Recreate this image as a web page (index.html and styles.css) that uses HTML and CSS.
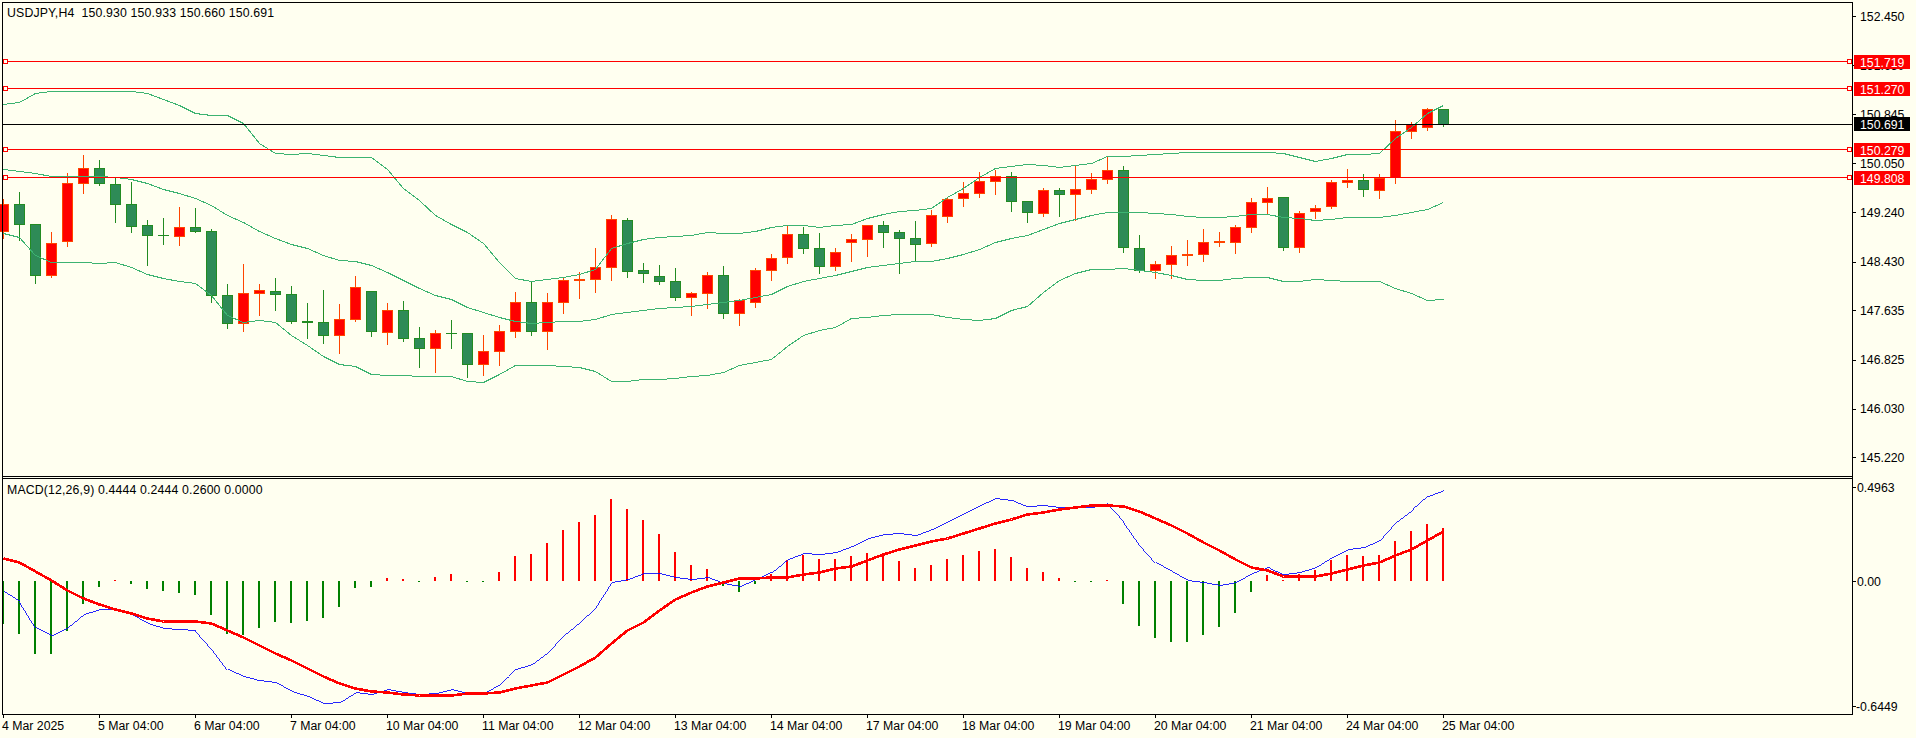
FILE: index.html
```html
<!DOCTYPE html>
<html lang="en">
  <head>
    <meta charset="UTF-8" />
    <title>USDJPY,H4</title>
    <link rel="stylesheet" href="styles.css">
  </head>
  <body>
    <svg class="chart" width="1916" height="738" viewBox="0 0 1916 738">
      <!-- Filled in by script.js -->
      <g id="candles"></g>
      <g id="bands"></g>
      <g id="histogram"></g>
      <g id="macdLines"></g>
      <g id="ticks"></g>

      <!-- Window frames -->
      <line class="frame" x1="2" y1="2.5" x2="1853" y2="2.5" />
      <line class="frame" x1="2" y1="476.5" x2="1853" y2="476.5" />
      <line class="frame" x1="2" y1="478.5" x2="1853" y2="478.5" />
      <line class="frame" x1="2" y1="714.5" x2="1853" y2="714.5" />
      <line class="frame" x1="2.5" y1="2" x2="2.5" y2="715" />
      <line class="frame" x1="1852.5" y1="2" x2="1852.5" y2="715" />

      <!-- Captions -->
      <text class="label caption" x="7" y="17">USDJPY,H4&#160;&#160;150.930 150.933 150.660 150.691</text>
      <text class="label caption" x="7" y="494">MACD(12,26,9) 0.4444 0.2444 0.2600 0.0000</text>

      <!-- Price scale -->
      <text class="label" x="1860" y="21">152.450</text>
      <text class="label" x="1860" y="70">151.650</text>
      <text class="label" x="1860" y="119">150.845</text>
      <text class="label" x="1860" y="168">150.050</text>
      <text class="label" x="1860" y="217">149.240</text>
      <text class="label" x="1860" y="266">148.430</text>
      <text class="label" x="1860" y="315">147.635</text>
      <text class="label" x="1860" y="364">146.825</text>
      <text class="label" x="1860" y="413">146.030</text>
      <text class="label" x="1860" y="462">145.220</text>

      <!-- MACD scale -->
      <text class="label" x="1857" y="492">0.4963</text>
      <text class="label" x="1857" y="586">0.00</text>
      <text class="label" x="1856" y="711">-0.6449</text>

      <!-- Horizontal levels and their price tags -->
      <g id="levels"></g>
      <g class="tag-red">
        <rect x="1854" y="55" width="56" height="14" />
        <text x="1860" y="67">151.719</text>
        <rect x="1854" y="82" width="56" height="14" />
        <text x="1860" y="94">151.270</text>
        <rect x="1854" y="143" width="56" height="14" />
        <text x="1860" y="155">150.279</text>
        <rect x="1854" y="171" width="56" height="14" />
        <text x="1860" y="183">149.808</text>
      </g>
      <g class="tag-black">
        <rect x="1854" y="117" width="56" height="14" />
        <text x="1860" y="129">150.691</text>
      </g>

      <!-- Time scale -->
      <text class="label" x="2" y="730">4 Mar 2025</text>
      <text class="label" x="98" y="730">5 Mar 04:00</text>
      <text class="label" x="194" y="730">6 Mar 04:00</text>
      <text class="label" x="290" y="730">7 Mar 04:00</text>
      <text class="label" x="386" y="730">10 Mar 04:00</text>
      <text class="label" x="482" y="730">11 Mar 04:00</text>
      <text class="label" x="578" y="730">12 Mar 04:00</text>
      <text class="label" x="674" y="730">13 Mar 04:00</text>
      <text class="label" x="770" y="730">14 Mar 04:00</text>
      <text class="label" x="866" y="730">17 Mar 04:00</text>
      <text class="label" x="962" y="730">18 Mar 04:00</text>
      <text class="label" x="1058" y="730">19 Mar 04:00</text>
      <text class="label" x="1154" y="730">20 Mar 04:00</text>
      <text class="label" x="1250" y="730">21 Mar 04:00</text>
      <text class="label" x="1346" y="730">24 Mar 04:00</text>
      <text class="label" x="1442" y="730">25 Mar 04:00</text>
    </svg>
    <script src="script.js"></script>
  </body>
</html>
```

FILE: styles.css
```css
/* Basic page styling */
body {
  margin: 0;
  background-color: #fffff0;
  overflow: hidden;
}

.chart {
  display: block;
  font-family: "Liberation Sans", Arial, sans-serif;
  font-size: 12.3px;
}

.label {
  fill: #000;
}

.caption {
  letter-spacing: 0.15px;
}

/* Frames and ticks */
.frame,
.tick {
  stroke: #000;
  stroke-width: 1;
}

/* Candles */
.wick-up {
  fill: #ff4500;
}

.wick-down {
  fill: #228b22;
}

.body-up {
  fill: #ff0000;
}

.body-down {
  fill: #2e8b57;
}

/* Indicator lines */
.band,
.macd,
.signal {
  fill: none;
  shape-rendering: crispEdges;
}

.band {
  stroke: #3cb371;
  stroke-width: 1;
}

.macd {
  stroke: #0000ff;
  stroke-width: 0.85;
}

.signal {
  stroke: #ff0000;
  stroke-width: 2.6;
}

/* MACD histogram */
.hist-up {
  fill: #ff0000;
}

.hist-down {
  fill: #008000;
}

/* Horizontal levels */
.level-red {
  stroke: #ff0000;
}

.level-black {
  stroke: #000;
}

.anchor {
  fill: #fffff0;
  stroke: #ff0000;
  stroke-width: 1;
}

/* Price tags */
.tag-red rect {
  fill: #ff0000;
}

.tag-black rect {
  fill: #000;
}

.tag-red text,
.tag-black text {
  fill: #fff;
}
```

FILE: script.js
```js
// Each candle: direction, body top, body bottom, high, low (y values times 3)
const candles = [
  ["u",613,695,597,713],["d",613,674,576,720],["d",673,827,673,848],["u",730,827,696,830],
  ["u",550,727,520,738],["u",505,551,465,578],["d",505,551,480,555],["d",553,614,530,665],
  ["d",613,680,546,695],["d",676,707,660,795],["d",705,707,655,732],["u",682,710,622,735],
  ["d",682,695,625,695],["d",694,887,688,905],["d",886,971,852,984],["u",880,971,793,993],
  ["u",870,881,852,945],["d",874,884,834,930],["d",883,965,858,968],["d",964,968,909,1014],
  ["d",967,1007,870,1029],["u",958,1007,912,1059],["u",862,959,828,963],["d",874,995,874,1007],
  ["u",931,998,909,1032],["d",931,1016,903,1023],["d",1015,1046,981,1100],["u",1000,1046,990,1115],
  ["d",999,1001,960,1044],["d",1000,1094,1000,1132],["u",1054,1094,1005,1125],["u",994,1055,975,1095],
  ["u",907,995,876,1011],["d",907,995,843,1004],["u",907,995,880,1047],["u",841,908,834,939],
  ["u",837,842,817,894],["u",802,839,744,876],["u",658,803,645,839],["d",661,815,655,830],
  ["d",810,821,789,846],["d",829,845,795,852],["d",844,893,804,899],["u",880,893,875,945],
  ["u",826,881,816,924],["d",826,941,798,953],["u",901,941,897,975],["u",811,908,804,921],
  ["u",775,812,762,840],["u",703,773,678,789],["d",703,746,681,759],["d",745,800,699,819],
  ["u",757,800,744,810],["u",718,728,702,783],["u",676,719,676,768],["d",676,698,663,741],
  ["d",697,716,690,819],["d",715,734,663,784],["u",646,731,630,738],["u",598,650,591,666],
  ["u",580,596,546,618],["u",544,581,517,591],["u",529,545,510,582],["d",529,605,517,633],
  ["d",604,638,604,666],["u",571,641,564,648],["d",571,584,564,648],["u",568,584,495,660],
  ["u",538,569,519,579],["u",511,539,471,549],["d",511,743,498,756],["d",745,812,705,816],
  ["u",793,812,783,834],["u",766,794,738,834],["u",763,767,720,795],["u",727,764,687,783],
  ["u",724,729,696,738],["u",682,728,675,759],["u",607,683,594,696],["u",595,608,561,639],
  ["d",592,743,592,750],["u",640,743,633,756],["u",625,637,615,654],["u",547,620,540,624],
  ["u",541,548,507,561],["d",541,569,522,588],["u",533,572,522,594],["u",394,533,360,549],
  ["u",373,395,366,414],["u",328,383,325,390],["d",328,374,328,377]
];

// Bollinger bands, one y value per candle (times 3)
const upperBand = [313,307,280,274,274,274,274,274,274,279,296,315,340,346,346,370,430,460,463,460,465,471,472,472,508,563,600,645,672,697,730,785,833,843,838,831,822,806,743,730,716,710,709,705,697,700,700,693,681,676,676,680,674,673,654,642,634,630,625,591,565,531,505,497,493,496,501,496,488,469,468,465,462,460,457,457,457,457,455,456,460,470,483,473,463,463,458,415,380,340,315];
const middleBand = [508,513,520,528,529,529,529,530,537,548,568,578,594,615,645,667,692,714,731,745,766,781,784,795,817,840,863,884,897,921,935,952,963,970,967,964,964,957,942,937,930,924,922,917,912,907,900,892,881,858,843,835,825,813,801,796,790,784,784,774,762,748,727,714,706,688,670,657,646,637,637,637,640,643,647,650,650,647,643,643,650,655,660,657,652,652,652,645,637,626,607];
const lowerBand = [700,710,765,787,787,787,790,787,800,823,835,843,849,885,945,965,961,966,1005,1035,1068,1093,1098,1122,1125,1126,1129,1129,1129,1144,1147,1122,1094,1094,1094,1098,1102,1112,1143,1143,1138,1137,1135,1127,1125,1115,1095,1087,1077,1037,1005,990,982,955,950,945,943,943,943,952,958,961,953,930,918,875,840,818,808,808,805,810,817,826,837,840,841,835,831,832,843,844,838,841,844,844,844,865,878,900,898];

// MACD panel, y values times 3, counted from y = 370
const histogram = [761,791,851,851,782,701,650,631,642,656,662,668,674,734,791,794,773,755,758,752,743,710,653,650,624,627,632,621,612,632,632,606,558,552,519,480,456,435,387,417,450,492,546,585,597,647,665,641,612,570,555,567,567,558,549,552,573,594,585,567,555,543,537,561,594,606,624,636,636,631,701,767,803,815,815,794,770,728,665,615,630,612,600,570,555,558,555,513,483,462,474];
const macdLine = [662,692,770,794,770,733,716,716,733,760,775,777,781,835,897,918,930,935,963,977,1000,997,967,973,958,967,973,968,958,968,968,943,897,883,847,795,755,712,637,627,610,610,621,628,620,640,648,628,605,567,550,553,545,527,505,493,490,496,478,452,430,405,385,390,408,406,411,412,410,400,452,522,575,603,630,636,646,637,610,592,612,606,591,560,537,530,510,455,420,378,361];
const signalLine = [564,575,603,630,660,683,703,717,730,743,752,752,752,760,780,800,825,850,870,895,918,940,955,964,967,972,974,974,974,970,968,965,955,945,935,912,888,860,820,780,755,720,688,665,648,635,625,623,622,620,613,605,595,587,570,552,537,525,513,505,490,475,460,447,433,425,418,412,406,405,408,422,445,465,490,516,540,567,590,600,617,618,617,610,597,586,575,556,537,510,484];

const ZERO_Y = 581;
const SVG_NS = "http://www.w3.org/2000/svg";

function add(parentId, tag, attrs) {
  const el = document.createElementNS(SVG_NS, tag);
  Object.keys(attrs).forEach((key) => el.setAttribute(key, attrs[key]));
  document.getElementById(parentId).appendChild(el);
}

function rect(parentId, cls, x, y, width, height) {
  add(parentId, "rect", { class: cls, x, y, width, height, "shape-rendering": "crispEdges" });
}

function centerX(i) {
  return 3 + 16 * i;
}

function polyline(parentId, cls, values, offset) {
  const points = values.map((v, i) => `${centerX(i) + 0.5},${offset + Math.round(v / 3) + 0.5}`);
  add(parentId, "polyline", { class: cls, points: points.join(" ") });
}

// Candles
candles.forEach((c, i) => {
  const x = centerX(i);
  const up = c[0] === "u";
  const top = Math.round(c[1] / 3);
  const bottom = Math.max(Math.round(c[2] / 3), top + 1);
  const high = Math.round(c[3] / 3);
  const low = Math.round(c[4] / 3);
  const wick = up ? "wick-up" : "wick-down";
  const fill = up ? "body-up" : "body-down";
  rect("candles", wick, x, high, 1, low - high + 1);
  rect("candles", wick, x - 5, top, 11, bottom - top);
  if (bottom - top > 2) {
    rect("candles", fill, x - 4, top + 1, 9, bottom - top - 2);
  }
});

// Bollinger bands
polyline("bands", "band", upperBand, 0);
polyline("bands", "band", middleBand, 0);
polyline("bands", "band", lowerBand, 0);

// MACD histogram
histogram.forEach((v, i) => {
  const y = Math.round(370 + v / 3);
  const x = centerX(i) - 1;
  if (y < ZERO_Y) {
    rect("histogram", "hist-up", x, y, 2, ZERO_Y - y);
  } else {
    rect("histogram", "hist-down", x, ZERO_Y, 2, Math.max(y - ZERO_Y, 1));
  }
});

// MACD and signal lines
polyline("macdLines", "macd", macdLine, 370);
polyline("macdLines", "signal", signalLine, 370);

// Scale ticks
[16, 65, 114, 163, 212, 262, 310, 360, 409, 457, 487, 581, 706].forEach((y) => {
  add("ticks", "line", { class: "tick", x1: 1853, y1: y + 0.5, x2: 1856, y2: y + 0.5 });
});
for (let i = 0; i <= 15; i++) {
  const x = centerX(i * 6) + 0.5;
  add("ticks", "line", { class: "tick", x1: x, y1: 715, x2: x, y2: 718 });
}

// Horizontal levels
[61, 88, 149, 177].forEach((y) => {
  add("levels", "line", { class: "level-red", x1: 3, y1: y + 0.5, x2: 1852, y2: y + 0.5 });
  rect("levels", "anchor", 3.5, y - 1.5, 4, 4);
  rect("levels", "anchor", 1847.5, y - 1.5, 4, 4);
});
add("levels", "line", { class: "level-black", x1: 3, y1: 124.5, x2: 1852, y2: 124.5 });
```
